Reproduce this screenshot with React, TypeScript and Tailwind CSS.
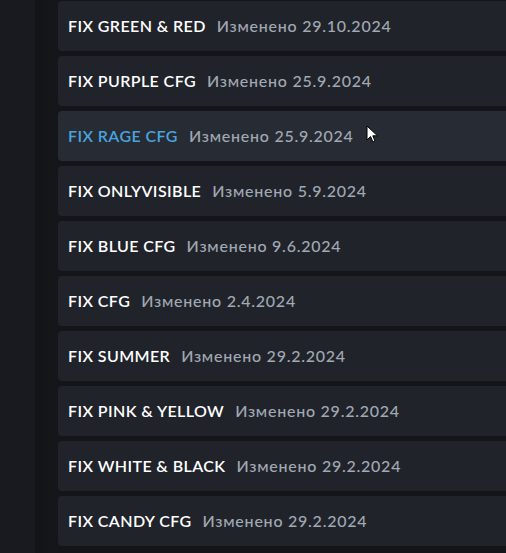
import React from 'react';

interface Config {
  name: string;
  date: string;
  hover?: boolean;
}

const configs: Config[] = [
  { name: 'FIX GREEN & RED', date: '29.10.2024' },
  { name: 'FIX PURPLE CFG', date: '25.9.2024' },
  { name: 'FIX RAGE CFG', date: '25.9.2024', hover: true },
  { name: 'FIX ONLYVISIBLE', date: '5.9.2024' },
  { name: 'FIX BLUE CFG', date: '9.6.2024' },
  { name: 'FIX CFG', date: '2.4.2024' },
  { name: 'FIX SUMMER', date: '29.2.2024' },
  { name: 'FIX PINK & YELLOW', date: '29.2.2024' },
  { name: 'FIX WHITE & BLACK', date: '29.2.2024' },
  { name: 'FIX CANDY CFG', date: '29.2.2024' },
];

const Cursor = () => (
  <svg className="absolute left-[366px] top-[125px]" width="14" height="20" viewBox="0 0 14 20">
    <path d="M1 1 L1 15 L4.5 11.5 L7 17 L9 16 L6.8 10.8 L11.5 10.8 Z" fill="#fff" stroke="#000" strokeWidth="1" strokeLinejoin="round" />
  </svg>
);

const Row: React.FC<{ cfg: Config }> = ({ cfg }) => (
  <div
    className={`relative h-[50px] rounded-l-[4px] flex items-center pl-[10px] gap-[11px] ${cfg.hover ? 'bg-[#272b33]' : 'bg-[#20232a]'}`}
  >
    <span className={`text-[16px] font-semibold tracking-[0.4px] ${cfg.hover ? 'text-[#4aa3df]' : 'text-white'}`}>
      {cfg.name}
    </span>
    <span className="text-[16px] font-medium tracking-[0.75px] text-[#a1a9b4]">Изменено {cfg.date}</span>
  </div>
);

export default function App() {
  return (
    <div
      className="relative w-[506px] h-[553px] overflow-hidden flex bg-[#131519]"
      style={{ fontFamily: 'Lato, "Noto Sans", sans-serif' }}
    >
      <div className="w-[35px] shrink-0 bg-[#181a1f]" />
      <div className="w-[23px] shrink-0 bg-gradient-to-r from-[#121418] to-[#14161a]" />
      <div className="flex-1 flex flex-col gap-[5px] pt-[1px]">
        {configs.map((c) => (
          <Row key={c.name} cfg={c} />
        ))}
      </div>
      <Cursor />
    </div>
  );
}
